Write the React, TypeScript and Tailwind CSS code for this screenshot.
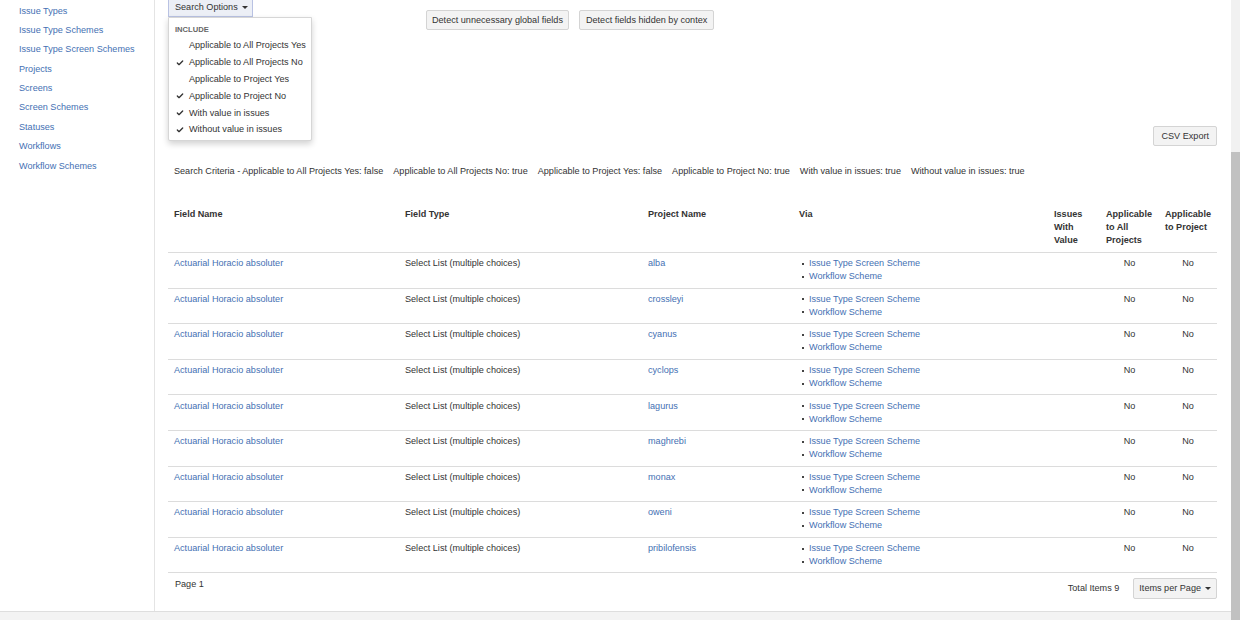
import { Check } from "lucide-react";

const sideLinks = [
  "Issue Types",
  "Issue Type Schemes",
  "Issue Type Screen Schemes",
  "Projects",
  "Screens",
  "Screen Schemes",
  "Statuses",
  "Workflows",
  "Workflow Schemes",
];

const menuItems = [
  { label: "Applicable to All Projects Yes", checked: false },
  { label: "Applicable to All Projects No", checked: true },
  { label: "Applicable to Project Yes", checked: false },
  { label: "Applicable to Project No", checked: true },
  { label: "With value in issues", checked: true },
  { label: "Without value in issues", checked: true },
];

const criteria = [
  "Search Criteria - Applicable to All Projects Yes: false",
  "Applicable to All Projects No: true",
  "Applicable to Project Yes: false",
  "Applicable to Project No: true",
  "With value in issues: true",
  "Without value in issues: true",
];

const projects = [
  "alba",
  "crossleyi",
  "cyanus",
  "cyclops",
  "lagurus",
  "maghrebi",
  "monax",
  "oweni",
  "pribilofensis",
];

function Caret() {
  return (
    <span className="ml-[4px] inline-block h-0 w-0 border-x-[3px] border-t-[3px] border-x-transparent border-t-[#333]" />
  );
}

export default function App() {
  return (
    <div className="flex h-[620px] w-[1240px] overflow-hidden bg-white text-[9.1px] leading-[13px] text-[#333] [font-family:'Liberation_Sans',Arial,sans-serif]">
      <div className="flex min-w-0 flex-1 flex-col">
        <div className="flex min-h-0 flex-1">
          <aside className="w-[155px] shrink-0 border-r border-[#e4e4e4] pl-[19px] pt-[4.5px]">
            <ul className="flex flex-col gap-[6.4px]">
              {sideLinks.map((link) => (
                <li key={link} className="text-[#4470b3]">
                  {link}
                </li>
              ))}
            </ul>
          </aside>

          <main className="min-w-0 flex-1 pl-[13px] pr-[14px]">
            <div className="flex items-start">
              <div className="relative">
                <button
                  type="button"
                  className="flex h-[17px] w-[85px] items-center border-x border-b border-[#b9c2e3] bg-[#eceff6] pb-[2px] pl-[6px] text-[#333]"
                >
                  Search Options
                  <Caret />
                </button>
                <div className="absolute left-0 top-full z-10 w-[144px] rounded-b-[2px] border border-[#d6d6d6] bg-white pb-[1.6px] pt-[4.5px] shadow-[0_3px_6px_rgba(0,0,0,0.18)]">
                  <div className="pl-[6px] text-[7.6px] font-bold uppercase text-[#666]">
                    Include
                  </div>
                  <div className="mt-[2px]">
                    {menuItems.map((item) => (
                      <div key={item.label} className="flex h-[16.8px] items-center">
                        <span className="flex w-[20px] justify-center pl-[2px]">
                          {item.checked && (
                            <Check className="h-[8px] w-[8px] text-[#333]" strokeWidth={4} />
                          )}
                        </span>
                        <span>{item.label}</span>
                      </div>
                    ))}
                  </div>
                </div>
              </div>

              <div className="ml-[173px] mt-[10px] flex gap-[10px]">
                <button
                  type="button"
                  className="h-[20px] rounded-[2px] border border-[#d4d4d4] bg-[#f3f3f3] px-[5px]"
                >
                  Detect unnecessary global fields
                </button>
                <button
                  type="button"
                  className="h-[20px] rounded-[2px] border border-[#d4d4d4] bg-[#f3f3f3] px-[6px]"
                >
                  Detect fields hidden by contex
                </button>
              </div>
            </div>

            <div className="mt-[96px] flex justify-end">
              <button
                type="button"
                className="h-[20px] rounded-[2px] border border-[#d4d4d4] bg-[#f3f3f3] px-[7px]"
              >
                CSV Export
              </button>
            </div>

            <div className="mt-[18.5px] flex gap-[10px] pl-[6px]">
              {criteria.map((c) => (
                <span key={c}>{c}</span>
              ))}
            </div>

            <table className="mt-[24px] w-full table-fixed border-collapse">
              <colgroup>
                <col className="w-[231px]" />
                <col className="w-[243px]" />
                <col className="w-[151px]" />
                <col className="w-[255px]" />
                <col className="w-[52px]" />
                <col className="w-[59px]" />
                <col className="w-[58px]" />
              </colgroup>
              <thead>
                <tr className="border-b border-[#dcdcdc] text-left align-top font-bold">
                  <th className="px-[6px] pb-[5.5px] pt-[6px]">Field Name</th>
                  <th className="px-[6px] pb-[5.5px] pt-[6px]">Field Type</th>
                  <th className="px-[6px] pb-[5.5px] pt-[6px]">Project Name</th>
                  <th className="px-[6px] pb-[5.5px] pt-[6px]">Via</th>
                  <th className="pl-[6px] pr-[4px] pb-[5.5px] pt-[6px]">Issues With Value</th>
                  <th className="pl-[6px] pr-[4px] pb-[5.5px] pt-[6px]">Applicable to All Projects</th>
                  <th className="pl-[6px] pr-[4px] pb-[5.5px] pt-[6px]">Applicable to Project</th>
                </tr>
              </thead>
              <tbody>
                {projects.map((p) => (
                  <tr key={p} className="border-b border-[#dcdcdc] align-top">
                    <td className="px-[6px] py-[4.3px] text-[#4470b3]">Actuarial Horacio absoluter</td>
                    <td className="px-[6px] py-[4.3px]">Select List (multiple choices)</td>
                    <td className="px-[6px] py-[4.3px] text-[#4470b3]">{p}</td>
                    <td className="px-[6px] py-[4.3px]">
                      <div className="flex items-center">
                        <span className="ml-[3px] mr-[5px] h-[2px] w-[2px] bg-[#444]" />
                        <span className="text-[#4470b3]">Issue Type Screen Scheme</span>
                      </div>
                      <div className="flex items-center">
                        <span className="ml-[3px] mr-[5px] h-[2px] w-[2px] bg-[#444]" />
                        <span className="text-[#4470b3]">Workflow Scheme</span>
                      </div>
                    </td>
                    <td className="px-[6px] py-[4.3px]" />
                    <td className="py-[4.3px] text-center">No</td>
                    <td className="py-[4.3px] text-center">No</td>
                  </tr>
                ))}
              </tbody>
            </table>

            <div className="flex items-start justify-between">
              <span className="mt-[4.5px] pl-[7px]">Page 1</span>
              <div className="mt-[5px] flex h-[21px] items-center gap-[14px]">
                <span>Total Items 9</span>
                <button
                  type="button"
                  className="flex h-[21px] items-center rounded-[2px] border border-[#d4d4d4] bg-[#f3f3f3] px-[5px]"
                >
                  Items per Page
                  <Caret />
                </button>
              </div>
            </div>
          </main>
        </div>
        <div className="h-[9px] shrink-0 border-t border-[#dedede] bg-[#f3f3f3]" />
      </div>

      <div className="flex w-[9px] shrink-0 flex-col">
        <div className="h-[152px] bg-[#f1f1f1]" />
        <div className="flex-1 bg-[#c1c1c1]" />
      </div>
    </div>
  );
}
